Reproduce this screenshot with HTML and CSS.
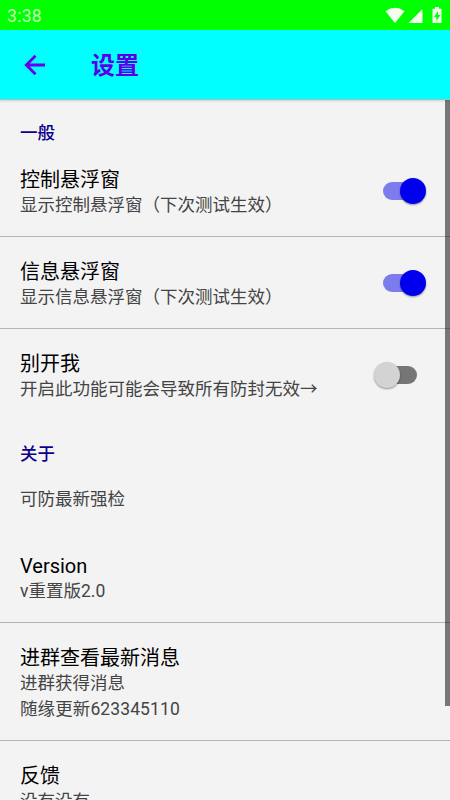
FILE: index.html
```html
<!DOCTYPE html>
<html lang="zh-CN">
<head>
<meta charset="utf-8">
<title>设置</title>
<link rel="stylesheet" href="styles.css">
</head>
<body>
<div class="screen">
  <div class="statusbar">
    <span class="clock">3:38</span>
    <svg class="status-icons" width="60" height="20" viewBox="0 0 60 20">
      <path d="M0.500 5.200Q10 -1.600 19.500 5.200L10 17Z"/>
      <path d="M37.500 3V17H23.500Z"/>
      <path fill-rule="evenodd" d="M50 1h4v1.800h2.500v14.200h-9V2.800H50ZM53 5l-4 6h2.400v4l4-6H53Z"/>
    </svg>
  </div>
  <header class="appbar">
    <svg class="back" width="22" height="22" viewBox="0 0 22 22"><path d="M21 11H2.500M11.500 1.800L2.300 11L11.500 20.200"/></svg>
    <h1>设置</h1>
  </header>
  <main class="list">
    <h2>一般</h2>
    <div class="row line">
      <div class="text"><div class="title">控制悬浮窗</div><div class="summary">显示控制悬浮窗（下次测试生效）</div></div>
      <div class="switch on"><i></i></div>
    </div>
    <div class="row line">
      <div class="text"><div class="title">信息悬浮窗</div><div class="summary">显示信息悬浮窗（下次测试生效）</div></div>
      <div class="switch on"><i></i></div>
    </div>
    <div class="row">
      <div class="text"><div class="title">别开我</div><div class="summary">开启此功能可能会导致所有防封无效→</div></div>
      <div class="switch"><i></i></div>
    </div>
    <h2>关于</h2>
    <div class="row note"><div class="summary">可防最新强检</div></div>
    <div class="row line">
      <div class="text"><div class="title">Version</div><div class="summary">v重置版2.0</div></div>
    </div>
    <div class="row line tall">
      <div class="text"><div class="title">进群查看最新消息</div><div class="summary">进群获得消息<br><span class="group">随缘更新623345110</span></div></div>
    </div>
    <div class="row">
      <div class="text"><div class="title">反馈</div><div class="summary">没有没有</div></div>
    </div>
    <div class="scrollbar"></div>
  </main>
</div>
</body>
</html>
```
FILE: styles.css
```css
* { box-sizing: border-box; margin: 0; }
body { font-family: Roboto, "Noto Sans CJK SC", sans-serif; background: #f3f3f3; }
.screen { height: 800px; overflow: hidden; display: flex; flex-direction: column; }
.statusbar {
  flex: none; height: 30px; background: #00ff00;
  display: flex; align-items: center; justify-content: space-between;
  padding: 1px 5px 0 7px;
}
.clock { font-size: 17.5px; letter-spacing: .3px; color: #c4ffb4; line-height: 30px; }
.status-icons { fill: #f2ffec; }
.appbar {
  flex: none; height: 70px; background: #00ffff; border-bottom: 1px solid #8fc9cb;
  display: flex; align-items: center; padding-left: 24px; gap: 45px;
  box-shadow: 0 1px 2px rgba(0, 0, 0, .15); z-index: 1;
}
.back { fill: none; stroke: #6a00ee; stroke-width: 2.8; }
h1 { padding-top: 3px; font-size: 24px; font-weight: 700; line-height: 36px; color: #5a00e8; }
.list { position: relative; flex: 1; overflow: hidden; }
h2 { height: 45px; padding: 21px 20px 0; font-size: 17.5px; line-height: 24px; font-weight: 500; color: #0a008c; }
.row { height: 92px; padding: 23px 24px 0 20px; display: flex; justify-content: space-between; }
.line { border-bottom: 1px solid #b4b4b4; }
.note { height: 65px; padding-top: 20px; }
.tall { height: 118px; }
.title { font-size: 20px; line-height: 24px; color: #000; }
.summary { font-size: 17.5px; line-height: 26px; color: #444; white-space: nowrap; }
.group { letter-spacing: .1px; }
.switch { flex: none; width: 52px; height: 26px; margin-top: 9.5px; display: flex; align-items: center; position: relative; }
.switch::before { content: ""; width: 34px; height: 18px; margin-left: 9px; border-radius: 9px; background: #767676; }
.switch i { position: absolute; left: 0; top: 0; width: 26px; height: 26px; border-radius: 50%; background: #d3d3d3; box-shadow: 0 1px 2px rgba(0, 0, 0, .4); }
.on::before { background: #7c7cef; }
.on i { left: auto; right: 0; background: #0000ee; }
.scrollbar { position: absolute; right: 0; top: 0; width: 5px; height: 606px; background: rgba(0, 0, 0, .51); }
```
